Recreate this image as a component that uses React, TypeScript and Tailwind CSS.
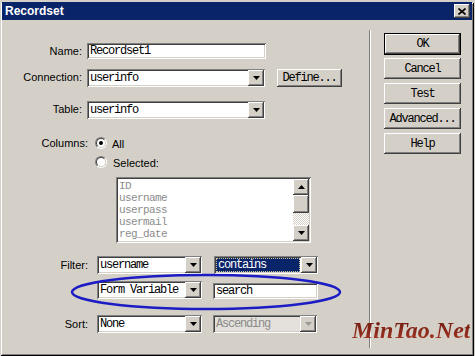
import React from 'react';

const sans = "font-['Liberation_Sans',Arial,sans-serif] text-[11px] text-black";
const mono = "font-['Liberation_Mono',monospace] text-[12px] tracking-[-1.2px]";
const monoSmall = "font-['Liberation_Mono',monospace] text-[11px] tracking-[-0.6px]";
const sunken =
  'shadow-[inset_1px_1px_0_#808080,inset_-1px_-1px_0_#ffffff,inset_2px_2px_0_#404040,inset_-2px_-2px_0_#d4d0c8]';
const raised =
  'shadow-[inset_-1px_-1px_0_#404040,inset_1px_1px_0_#ffffff,inset_-2px_-2px_0_#808080,inset_2px_2px_0_#d4d0c8]';

const Arrow = ({ up = false, disabled = false }: { up?: boolean; disabled?: boolean }) => (
  <div className={`flex h-[16px] w-[16px] shrink-0 items-center justify-center bg-[#d4d0c8] ${raised}`}>
    <svg width="7" height="4" viewBox="0 0 7 4">
      <path
        d={up ? 'M3.5 0 L7 4 L0 4 Z' : 'M0 0 L7 0 L3.5 4 Z'}
        fill={disabled ? '#9a9892' : '#000'}
      />
    </svg>
  </div>
);

const Select = ({
  text,
  w,
  focused = false,
  disabled = false,
}: {
  text: string;
  w: string;
  focused?: boolean;
  disabled?: boolean;
}) => (
  <div
    className={`flex h-[18px] shrink-0 items-center pl-[2px] pr-[1px] ${w} ${sunken} ${
      disabled ? 'bg-[#e4e1dc]' : 'bg-white'
    }`}
  >
    <div className="flex h-full flex-1 items-center py-[2px] pr-[1px]">
      <div
        className={`flex h-full w-full items-center pl-[1px] ${mono} ${
          focused
            ? 'border border-dotted border-[#c8c8a0] bg-[#0a246a] text-white'
            : disabled
            ? 'text-[#8a8a8a]'
            : 'text-black'
        }`}
      >
        {text}
      </div>
    </div>
    <Arrow disabled={disabled} />
  </div>
);

const Input = ({ text, w }: { text: string; w: string }) => (
  <div className={`flex h-[16px] shrink-0 items-center bg-white pl-[3px] ${w} ${sunken} ${mono} text-black`}>
    {text}
  </div>
);

const Radio = ({ checked = false }: { checked?: boolean }) => (
  <div className="flex h-[12px] w-[12px] items-center justify-center rounded-full border border-t-[#808080] border-l-[#808080] border-b-white border-r-white bg-[#d4d0c8]">
    <div className="flex h-[10px] w-[10px] items-center justify-center rounded-full border border-t-[#404040] border-l-[#404040] border-b-[#d4d0c8] border-r-[#d4d0c8] bg-white">
      {checked && <div className="h-[4px] w-[4px] rounded-full bg-black" />}
    </div>
  </div>
);

const Button = ({ label, isDefault = false }: { label: string; isDefault?: boolean }) =>
  isDefault ? (
    <div className="h-[22px] w-[77px] border border-black">
      <div className={`flex h-full w-full items-center justify-center bg-[#d4d0c8] ${raised} ${mono} text-black`}>
        {label}
      </div>
    </div>
  ) : (
    <div className={`flex h-[21px] w-[77px] items-center justify-center bg-[#d4d0c8] ${raised} ${mono} text-black`}>
      {label}
    </div>
  );

const columns = ['ID', 'username', 'userpass', 'usermail', 'reg_date'];

export default function App() {
  return (
    <div
      className={`relative h-[356px] w-[475px] overflow-hidden bg-[#d4d0c8] ${sans}`}
    >
      <div className="h-[354px] w-[474px] shadow-[inset_1px_1px_0_#d4d0c8,inset_-1px_-1px_0_#000000,inset_2px_2px_0_#ffffff,inset_-2px_-2px_0_#808080]">
        {/* title bar */}
        <div className="mx-[2px] mt-[2px] flex h-[18px] items-center justify-between bg-[#0a246a] pl-[3px] pr-[2px]">
          <span className="font-['Liberation_Sans',Arial,sans-serif] text-[12px] font-bold text-white">Recordset</span>
          <div className={`flex h-[14px] w-[16px] items-center justify-center bg-[#d4d0c8] ${raised}`}>
            <svg width="8" height="7" viewBox="0 0 8 7">
              <path d="M0.5 0.5 L7.5 6.5 M7.5 0.5 L0.5 6.5" stroke="#000" strokeWidth="1.6" />
            </svg>
          </div>
        </div>

        <div className="flex">
          {/* left form */}
          <div className="w-[369px] shrink-0">
            <div className="mt-[23px] flex h-[16px] items-center">
              <div className="w-[82px] text-right">Name:</div>
              <div className="ml-[5px]">
                <Input text="Recordset1" w="w-[179px]" />
              </div>
            </div>

            <div className="mt-[9px] flex h-[19px] items-center">
              <div className="w-[82px] text-right">Connection:</div>
              <div className="ml-[5px]">
                <Select text="userinfo" w="w-[178px]" />
              </div>
              <div className={`ml-[12px] flex h-[18px] w-[65px] items-center justify-center bg-[#d4d0c8] ${raised} ${mono} text-black`}>
                Define...
              </div>
            </div>

            <div className="mt-[13px] flex h-[19px] items-center">
              <div className="w-[82px] text-right">Table:</div>
              <div className="ml-[5px]">
                <Select text="userinfo" w="w-[178px]" />
              </div>
            </div>

            <div className="mt-[17px] flex h-[14px] items-center">
              <div className="w-[88px] text-right">Columns:</div>
              <div className="ml-[7px]">
                <Radio checked />
              </div>
              <span className="ml-[5px] mt-[3px]">All</span>
            </div>
            <div className="mt-[5px] flex h-[14px] items-center">
              <div className="ml-[95px]">
                <Radio />
              </div>
              <span className="ml-[6px] mt-[3px]">Selected:</span>
            </div>

            <div className={`ml-[116px] mt-[8px] flex h-[66px] w-[195px] bg-white p-[2px] ${sunken}`}>
              <div className={`flex-1 pl-[1px] pt-[1px] leading-[12px] ${monoSmall} text-[#8c8c8c]`}>
                {columns.map((c) => (
                  <div key={c} className="h-[12px]">{c}</div>
                ))}
              </div>
              <div className="flex w-[16px] flex-col bg-[repeating-conic-gradient(#ffffff_0_25%,#d4d0c8_0_50%)] bg-[length:2px_2px]">
                <Arrow up />
                <div className={`h-[18px] w-[16px] bg-[#d4d0c8] ${raised}`} />
                <div className="flex-1" />
                <Arrow />
              </div>
            </div>

            <div className="mt-[13px] flex h-[18px] items-center">
              <div className="w-[88px] text-right">Filter:</div>
              <div className="ml-[9px]">
                <Select text="username" w="w-[105px]" />
              </div>
              <div className="ml-[12px]">
                <Select text="contains" w="w-[104px]" focused />
              </div>
            </div>

            <div className="mt-[7px] flex h-[18px] items-center">
              <div className="ml-[97px]">
                <Select text="Form Variable" w="w-[105px]" />
              </div>
              <div className="ml-[11px] mt-[2px]">
                <Input text="search" w="w-[105px]" />
              </div>
            </div>

            <div className="mt-[16px] flex h-[18px] items-center">
              <div className="w-[88px] text-right">Sort:</div>
              <div className="ml-[9px]">
                <Select text="None" w="w-[105px]" />
              </div>
              <div className="ml-[11px]">
                <Select text="Ascending" w="w-[104px]" disabled />
              </div>
            </div>
          </div>

          {/* separator */}
          <div className="mt-[10px] h-[318px] w-[2px] border-l border-r border-l-[#808080] border-r-white" />

          {/* buttons */}
          <div className="ml-[13px] mt-[13px] flex flex-col gap-[3px]">
            <Button label="OK" isDefault />
            <div className="flex flex-col gap-[4px]">
              <Button label="Cancel" />
              <Button label="Test" />
              <Button label="Advanced..." />
              <Button label="Help" />
            </div>
          </div>
        </div>
      </div>

      {/* hand-drawn highlight around the form variable row */}
      <svg className="pointer-events-none absolute left-0 top-0" width="475" height="356">
        <ellipse cx="206" cy="292" rx="134" ry="17" fill="none" stroke="#1c1cc4" strokeWidth="2.5" />
      </svg>

      {/* watermark */}
      <div className="absolute left-[352px] top-[312px] bg-linear-to-b from-[#5a1008] to-[#b8402a] bg-clip-text font-['Liberation_Serif','Times_New_Roman',serif] text-[24px] font-bold italic text-transparent">
        MinTao.Net
      </div>
    </div>
  );
}
